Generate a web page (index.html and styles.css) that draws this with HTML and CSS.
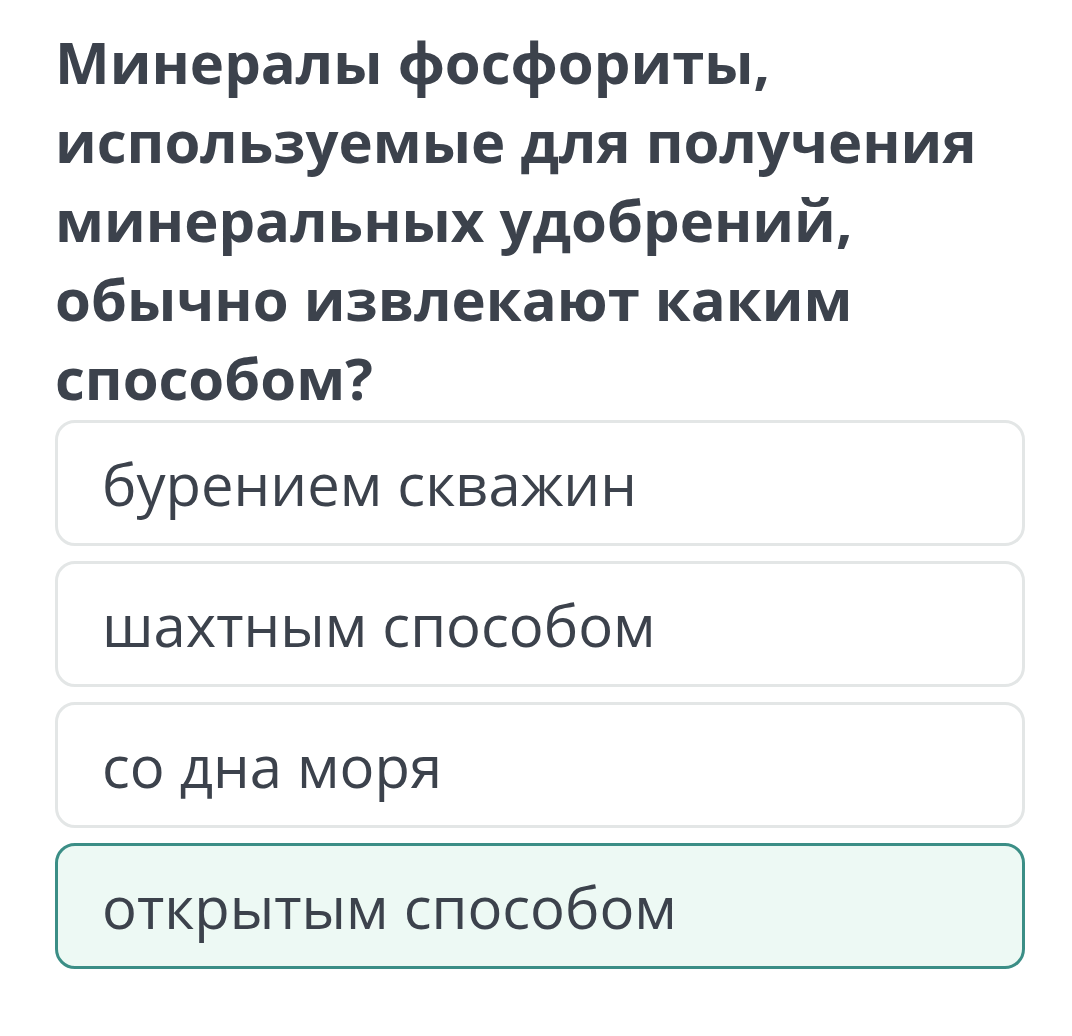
FILE: index.html
```html
<!DOCTYPE html>
<html lang="ru">
<head>
<meta charset="utf-8">
<link rel="stylesheet" href="styles.css">
</head>
<body>
<div class="quiz">
  <h1 class="question">Минералы фосфориты, используемые для получения минеральных удобрений, обычно извлекают каким способом?</h1>
  <div class="options">
    <div class="option"><span>бурением скважин</span></div>
    <div class="option"><span>шахтным способом</span></div>
    <div class="option"><span>со дна моря</span></div>
    <div class="option selected"><span>открытым способом</span></div>
  </div>
</div>
</body>
</html>
```
FILE: styles.css
```css
html, body {
  margin: 0;
  padding: 0;
  background: #ffffff;
}
body {
  font-family: "Open Sans", "Noto Sans", sans-serif;
  color: #3c424c;
}
.quiz {
  padding: 22px 47px 0 55px;
}
.question {
  margin: 0;
  font-size: 58px;
  font-weight: 700;
  line-height: 79px;
  width: 960px;
}
.options {
  display: flex;
  flex-direction: column;
  gap: 15px;
  margin-top: 3px;
}
.option {
  box-sizing: border-box;
  height: 126px;
  border: 3px solid #e3e6e6;
  border-radius: 20px;
  display: flex;
  align-items: center;
  padding-left: 44px;
  font-size: 58px;
  font-weight: 400;
}
.option.selected {
  background: #edf9f4;
  border-color: #3b8e86;
}
```
